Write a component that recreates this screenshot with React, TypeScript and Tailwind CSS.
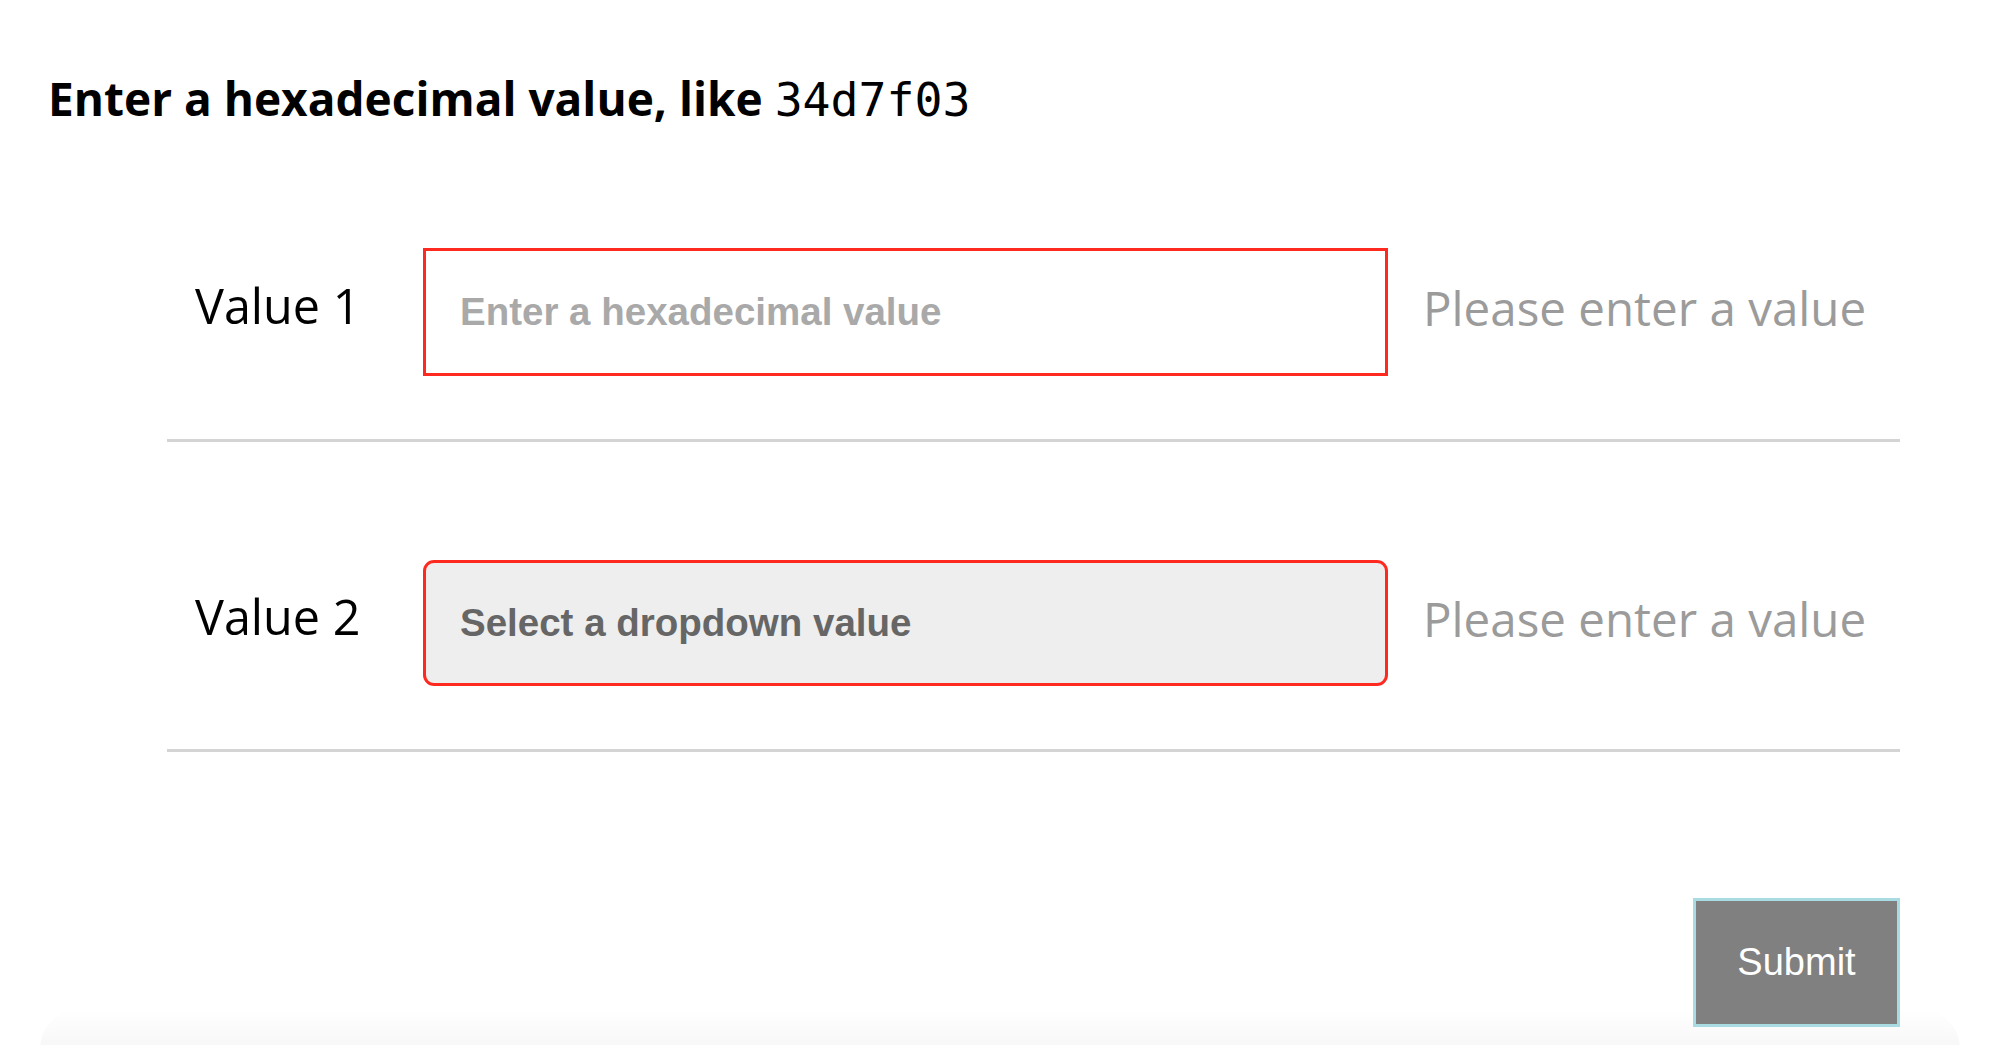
import React from 'react'

function FieldRow({ label, children }: { label: string; children: React.ReactNode }) {
    return (
        <div className="flex items-center pt-[118px] pb-[63px] border-b-[3px] border-[#d4d4d4]">
            <div className="w-[256px] pl-[28px] pb-[14px] text-[48.5px] text-black font-['Open_Sans','Noto_Sans',sans-serif]">
                {label}
            </div>
            {children}
            <div className="ml-[35px] pb-[8px] text-[47.5px] text-[#9b9b9b] whitespace-nowrap font-['Open_Sans','Noto_Sans',sans-serif]">
                Please enter a value
            </div>
        </div>
    )
}

export default function App() {
    return (
        <div className="min-h-screen bg-white overflow-hidden">
            <div className="h-[130px] pl-[48px] pt-[75px]">
                <h1 className="text-[46px] leading-none font-bold text-black whitespace-nowrap font-['Open_Sans','Noto_Sans',sans-serif]">
                    Enter a hexadecimal value, like{' '}
                    <span className="font-normal text-[46.5px] font-['DejaVu_Sans_Mono',monospace]">34d7f03</span>
                </h1>
            </div>

            <div className="ml-[167px] w-[1733px]">
                <FieldRow label="Value 1">
                    <input
                        type="text"
                        placeholder="Enter a hexadecimal value"
                        className="w-[965px] h-[128px] border-[3px] border-[#ff2a1f] bg-white pl-[34px] text-[38.5px] font-bold outline-none placeholder:text-[#a9a9a9] font-['Liberation_Sans',Arial,sans-serif]"
                    />
                </FieldRow>
                <FieldRow label="Value 2">
                    <div className="w-[965px] h-[126px] flex items-center border-[3px] border-[#ff2a1f] rounded-[11px] bg-[#eeeeee] pl-[34px] text-[38.5px] font-bold text-[#666666] font-['Liberation_Sans',Arial,sans-serif]">
                        Select a dropdown value
                    </div>
                </FieldRow>

                <div className="flex justify-end mt-[146px]">
                    <button className="relative z-10 w-[207px] h-[129px] bg-[#808080] border-[3px] border-[#a9dbe3] text-white text-[38px] font-['Liberation_Sans',Arial,sans-serif]">
                        Submit
                    </button>
                </div>
            </div>

            <div className="mx-[40px] h-[40px] -mt-[18px] rounded-t-[40px] bg-gradient-to-b from-white to-[#f7f7f7]" />
        </div>
    )
}
